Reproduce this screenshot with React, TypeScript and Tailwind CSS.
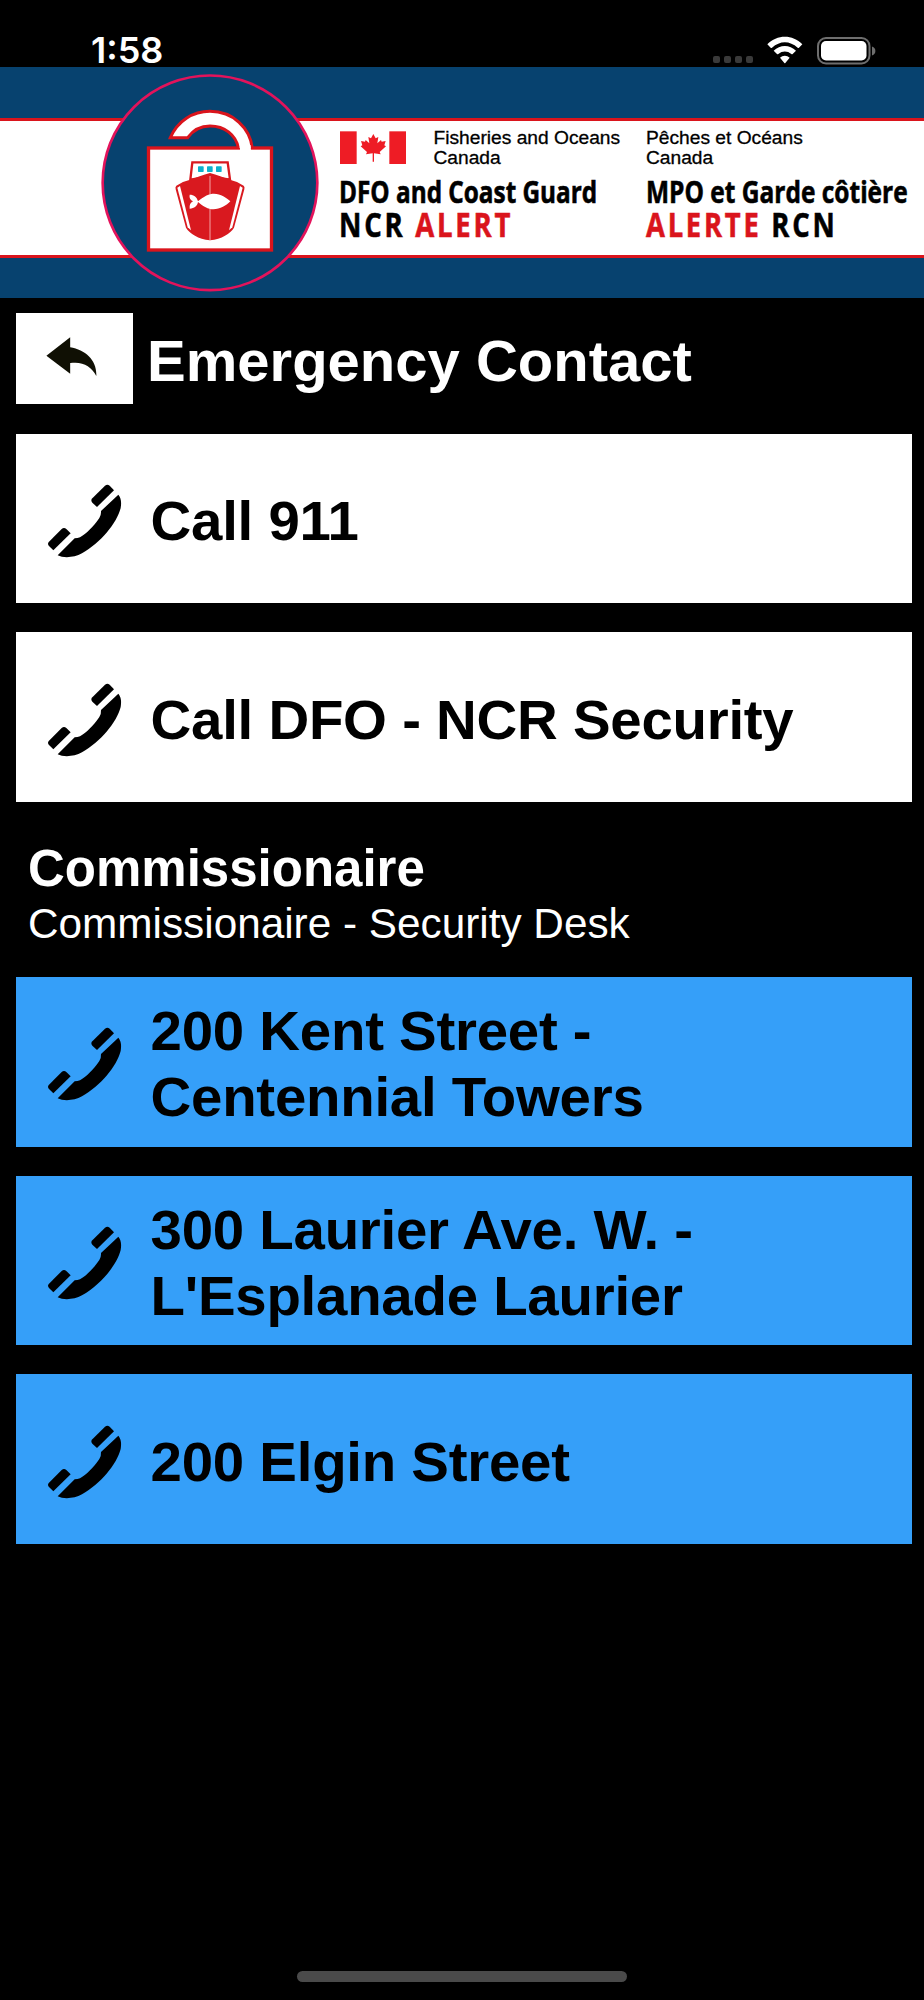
import React from "react";

type Contact = {
  name: string;
  second?: string;
};

const mainContacts: Contact[] = [
  { name: "Call 911" },
  { name: "Call DFO - NCR Security" },
];

const deskContacts: Contact[] = [
  { name: "200 Kent Street -", second: "Centennial Towers" },
  { name: "300 Laurier Ave. W. -", second: "L'Esplanade Laurier" },
  { name: "200 Elgin Street" },
];

function StatusBar() {
  return (
    <div className="flex h-[67px] shrink-0 items-end justify-between pl-[91px] pr-[48px]">
      <span className="font-['Inter',sans-serif] text-[36px] font-semibold leading-[33px]">
        1:58
      </span>
      <div className="flex h-[32px] items-start">
        <div className="mr-[14px] mt-[21px] flex gap-[4px]">
          <span className="h-[7px] w-[7px] rounded-[2px] bg-[#3a3a3a]" />
          <span className="h-[7px] w-[7px] rounded-[2px] bg-[#3a3a3a]" />
          <span className="h-[7px] w-[7px] rounded-[2px] bg-[#3a3a3a]" />
          <span className="h-[7px] w-[7px] rounded-[2px] bg-[#3a3a3a]" />
        </div>
        <svg className="mr-[14px] mt-[1px] h-[28px] w-[36px]" viewBox="232 48 108 84" fill="#fff">
          <path d="M233 73C262 43 309 43 338 73L328 83Q326 85 324 83C300 61 271 61 247 83Q245 85 243 83Z" />
          <path d="M252 92C271 73 300 73 319 92L309 102Q307 104 305 102C293 92 278 92 266 102Q264 104 262 102Z" />
          <path d="M271 113C279 105 292 105 300 113L287 129Q285.500 131 284 129Z" />
        </svg>
        <svg className="mt-[2px] h-[28px] w-[59px]" viewBox="0 0 59 28">
          <rect x="1" y="1" width="51.500" height="25.500" rx="8" fill="none" stroke="#6e6e6e" strokeWidth="2" />
          <rect x="4" y="4" width="45.500" height="19.500" rx="5" fill="#fff" />
          <path d="M55 9.500C59.500 11 59.500 17 55 18.500Z" fill="#6e6e6e" />
        </svg>
      </div>
    </div>
  );
}

function LockBadge() {
  return (
    <svg className="absolute left-[100px] top-[6px] h-[220px] w-[220px]" viewBox="300 218 660 660">
      <circle cx="630" cy="547.500" r="322" fill="#07426f" stroke="#e3135b" strokeWidth="8" />
      {/* padlock */}
      <rect x="445.500" y="443" width="369" height="306" fill="#fff" stroke="#da141c" strokeWidth="10" />
      <path
        d="M715 443C708 404 674 377 630 377C603 377 578 391 563 412H511C533 362 578 333 630 333C700 333 750 384 757 443"
        fill="#fff"
        stroke="#da141c"
        strokeWidth="9"
      />
      <path d="M719.500 434H751.500L753 450H720Z" fill="#fff" />
      {/* ship */}
      <path d="M577 486H683L690 538L630 528L571 538Z" fill="#fff" stroke="#d9191f" strokeWidth="7" />
      <g fill="#0cb1cd">
        <rect x="594" y="498" width="17" height="17" rx="2" />
        <rect x="621" y="498" width="17" height="17" rx="2" />
        <rect x="648" y="498" width="17" height="17" rx="2" />
      </g>
      <path
        d="M630 518C650 523 672 533 692 539Q715 544 731 556Q735 560 733 567L702 682C691 700 665 716 630 720C595 716 569 700 558 682L527 567Q525 560 529 556Q545 544 568 539C588 533 610 523 630 518Z"
        fill="#d9191f"
      />
      <path d="M532 562L540 557L573 690L563 681Z" fill="#fff" />
      <path d="M728 562L720 557L687 690L697 681Z" fill="#fff" />
      <path d="M630 527V720" stroke="#f3a3a5" strokeWidth="3" />
      <path
        d="M594 603C612 587 628 580 642 580C662 580 680 592 691 603C680 615 660 627 640 627C625 627 609 618 594 605C592 617 583 624 569 625C568 614 571 607 579 603C571 599 567 593 569 583C582 583 591 590 594 603Z"
        fill="#fff"
      />
    </svg>
  );
}

function Flag() {
  return (
    <svg className="h-[33px] w-[66px]" viewBox="60 62 198 99" fill="#ee1c25">
      <rect x="60" y="63" width="50" height="98" />
      <rect x="208" y="63" width="50" height="98" />
      <path d="M160 71L167 84L175 80L172 99L183 89L185 94L197 92L193 105L198 108L179 125L182 132L162 129V154H158V129L138 132L141 125L122 108L127 105L123 92L135 94L137 89L148 99L145 80L153 84Z" />
    </svg>
  );
}

function Banner() {
  return (
    <header className="relative h-[231px] shrink-0 bg-[#07426f] pt-[51px]">
      <div className="flex h-[140px] border-y-[3px] border-[#da141c] bg-white pl-[340px] pt-[7px] text-black">
        <div className="w-[306px] shrink-0">
          <div className="flex">
            <div className="w-[93.500px] pt-[3px]">
              <Flag />
            </div>
            <p className="whitespace-nowrap text-[19.200px] leading-[19.500px] [-webkit-text-stroke:0.300px]">
              Fisheries and Oceans
              <br />
              Canada
            </p>
          </div>
          <p className="mt-[8px] -ml-[1px] origin-left scale-x-[0.784] whitespace-nowrap font-['Open_Sans',sans-serif] text-[31px] font-bold leading-[32px] [-webkit-text-stroke:0.600px]">
            DFO and Coast Guard
          </p>
          <p className="-ml-[1px] origin-left scale-x-[0.81] whitespace-nowrap font-['Open_Sans',sans-serif] text-[34px] font-bold leading-[34px] tracking-[3.400px] [-webkit-text-stroke:0.600px]">
            NCR <span className="text-[#da141c]">ALERT</span>
          </p>
        </div>
        <div className="w-[278px] shrink-0">
          <p className="whitespace-nowrap text-[19.200px] leading-[19.500px] [-webkit-text-stroke:0.300px]">
            Pêches et Océans
            <br />
            Canada
          </p>
          <p className="mt-[8px] origin-left scale-x-[0.79] whitespace-nowrap font-['Open_Sans',sans-serif] text-[31px] font-bold leading-[32px] [-webkit-text-stroke:0.600px]">
            MPO et Garde côtière
          </p>
          <p className="origin-left scale-x-[0.806] whitespace-nowrap font-['Open_Sans',sans-serif] text-[34px] font-bold leading-[34px] tracking-[3.400px] [-webkit-text-stroke:0.600px]">
            <span className="text-[#da141c]">ALERTE</span> RCN
          </p>
        </div>
      </div>
      <LockBadge />
    </header>
  );
}

function PhoneIcon() {
  return (
    <svg className="mt-[5px] h-[76px] w-[76px] shrink-0" viewBox="140 160 228 228">
      <path d="M276 206L314 168Q321 162 328 168L341 182L290 232L276 219Q270 212 276 206Z" />
      <path d="M146 336L184 298Q191 292 198 298L211 311L159 362L146 349Q140 342 146 336Z" />
      <path d="M354 195L302 244Q303 256 297 265C279 291 258 312 239 323Q232 326 223 326L172 377C190 386 222 384 245 371C300 340 350 280 361 235C364 217 362 205 354 195Z" />
    </svg>
  );
}

function ContactButton({ contact, color }: { contact: Contact; color: string }) {
  return (
    <button
      className={`flex h-[169.600px] w-full shrink-0 items-center pl-[30.600px] text-left text-black ${color}`}
    >
      <PhoneIcon />
      <span className="ml-[28px] whitespace-nowrap pt-[5px] text-[56.400px] font-bold leading-[66px] tracking-[-0.250px]">
        {contact.name}
        {contact.second && (
          <>
            <br />
            {contact.second}
          </>
        )}
      </span>
    </button>
  );
}

export default function App() {
  return (
    <div className="flex h-[2000px] w-[924px] flex-col overflow-hidden bg-black font-['Liberation_Sans',Arial,sans-serif] text-white">
      <StatusBar />
      <Banner />
      <main className="flex flex-1 flex-col pl-[16px] pr-[12px] pt-[14.500px]">
        <div className="flex h-[91.500px] items-center">
          <button className="flex h-full w-[116.600px] shrink-0 items-center bg-white pb-[4px] pl-[29.600px]">
            <svg className="h-[39px] w-[51px]" viewBox="137 125 152 118" fill="#101004">
              <path d="M137 182L209 126V156C256 164 291 196 288 243C273 213 246 198 209 204V236Z" />
            </svg>
          </button>
          <h1 className="ml-[14.500px] whitespace-nowrap pt-[5px] text-[58px] font-bold leading-[66px]">
            Emergency Contact
          </h1>
        </div>
        <div className="mt-[29.700px] flex flex-col gap-[29.100px]">
          {mainContacts.map((c) => (
            <ContactButton key={c.name} contact={c} color="bg-white" />
          ))}
        </div>
        <section className="h-[175px] pl-[12px] pt-[37px]">
          <h2 className="text-[51px] font-bold leading-[60px]">Commissionaire</h2>
          <p className="text-[42.300px] leading-[50px]">Commissionaire - Security Desk</p>
        </section>
        <div className="flex flex-col gap-[29.100px]">
          {deskContacts.map((c) => (
            <ContactButton key={c.name} contact={c} color="bg-[#359ff9]" />
          ))}
        </div>
      </main>
      <div className="mb-[18px] ml-[297px] h-[11px] w-[330px] shrink-0 rounded-full bg-[#4a4a4a]" />
    </div>
  );
}
